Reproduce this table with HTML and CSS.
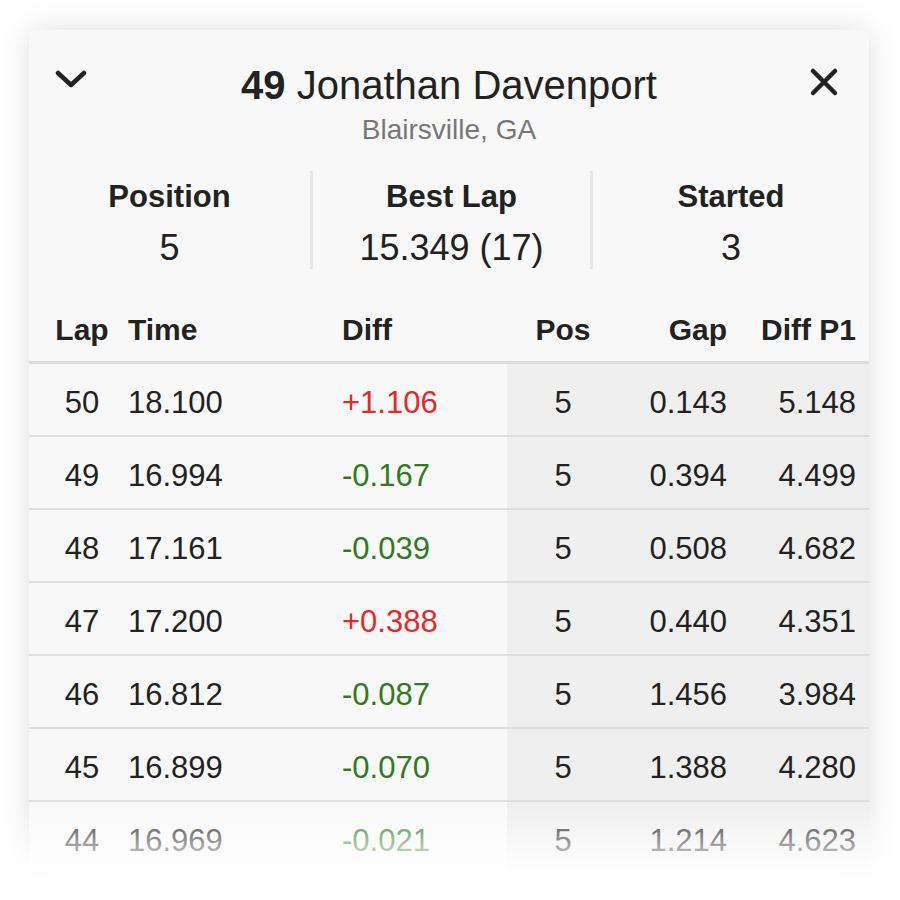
FILE: index.html
```html
<!DOCTYPE html>
<html lang="en">
    <head>
        <title>Driver Laps</title>
        <link rel="stylesheet" href="styles.css">
    </head>
    <body>
        <div class="page">
            <section class="driver-card">
                <div class="card-head">
                    <button class="icon-btn left" aria-label="Collapse">
                        <svg width="32" height="22" viewBox="0 0 32 22"><polyline points="3,5 16,17 29,5" fill="none" stroke="#222" stroke-width="4.5" stroke-linecap="round" stroke-linejoin="round"/></svg>
                    </button>
                    <div class="driver-name">
                        <h1><b>49</b> Jonathan Davenport</h1>
                        <p class="hometown">Blairsville, GA</p>
                    </div>
                    <button class="icon-btn right" aria-label="Close">
                        <svg width="30" height="30" viewBox="0 0 30 30"><path d="M4 4 L26 26 M26 4 L4 26" fill="none" stroke="#222" stroke-width="4.5" stroke-linecap="round"/></svg>
                    </button>
                </div>

                <div class="stats">
                    <div class="stat">
                        <div class="stat-label">Position</div>
                        <div class="stat-value">5</div>
                    </div>
                    <div class="stat">
                        <div class="stat-label">Best Lap</div>
                        <div class="stat-value">15.349 (17)</div>
                    </div>
                    <div class="stat">
                        <div class="stat-label">Started</div>
                        <div class="stat-value">3</div>
                    </div>
                </div>

                <div class="laps">
                    <div class="lap-row lap-head">
                        <div class="c-lap">Lap</div>
                        <div class="c-time">Time</div>
                        <div class="c-diff">Diff</div>
                        <div class="c-pos">Pos</div>
                        <div class="c-gap">Gap</div>
                        <div class="c-p1">Diff P1</div>
                    </div>
                    <div id="lap-rows"></div>
                </div>
            </section>
            <div class="fade"></div>
        </div>

        <script src="script.js"></script>
    </body>
</html>
```

FILE: styles.css
```css
body{
    margin: 0;
    background-color: #fff;
    font-family: "Liberation Sans", Arial, sans-serif;
    color: #222;
}
.page{
    position: relative;
    height: 900px;
    overflow: hidden;
}
.driver-card{
    width: 840px;
    margin: 30px 0 0 29px;
    padding-top: 32px;
    background-color: #f8f8f8;
    box-shadow: 0 0 30px rgba(0,0,0,0.13);
}
.card-head{
    display: grid;
    grid-template-columns: 1fr auto 1fr;
    align-items: start;
}
.icon-btn{
    background: none;
    border: none;
    padding: 0;
    display: flex;
}
.icon-btn.left{
    justify-self: start;
    margin: 6px 0 0 26px;
}
.icon-btn.right{
    justify-self: end;
    margin: 5px 30px 0 0;
}
.driver-name{
    text-align: center;
}
.driver-name h1{
    margin: 0;
    font-size: 40px;
    line-height: 46px;
    font-weight: normal;
}
.hometown{
    margin: 6px 0 0;
    font-size: 28px;
    line-height: 32px;
    color: #777;
}
.stats{
    display: grid;
    grid-template-columns: 281px 280px 279px;
    margin-top: 25px;
}
.stat{
    text-align: center;
    padding: 8px 0 0;
}
.stat + .stat{
    border-left: 3px solid #e8e8e8;
}
.stat-label{
    font-size: 31px;
    line-height: 36px;
    font-weight: bold;
}
.stat-value{
    margin-top: 12px;
    font-size: 36px;
    line-height: 42px;
}
.lap-row{
    display: grid;
    grid-template-columns: 99px 214px 165px 112px 108px 142px;
    border-bottom: 2px solid #dedede;
    font-size: 31px;
}
.lap-row > div{
    height: 71px;
    padding-top: 6px;
    line-height: 65px;
    box-sizing: border-box;
    white-space: nowrap;
}
.lap-head{
    border-bottom: 3px solid #dcdcdc;
    font-size: 30px;
    font-weight: bold;
}
.lap-head > div{
    height: 92px;
    line-height: 36px;
    padding-top: 43px;
}
.c-lap{
    padding-left: 7px;
    text-align: center;
}
.c-pos{
    text-align: center;
}
.c-gap{
    text-align: right;
}
.c-p1{
    text-align: right;
    padding-right: 13px;
}
.lap-row:not(.lap-head) .c-pos,
.lap-row:not(.lap-head) .c-gap,
.lap-row:not(.lap-head) .c-p1{
    background-color: #efefef;
}
.up{
    color: #e12a2a;
}
.down{
    color: #2e7b20;
}
.fade{
    position: absolute;
    left: 0;
    right: 0;
    top: 802px;
    height: 98px;
    background: linear-gradient(rgba(255,255,255,0), rgba(255,255,255,0.95) 72%, #fff);
}
```

FILE: script.js
```js
// laps, newest first
const laps = [
  [50, '18.100', '+1.106', 5, '0.143', '5.148'],
  [49, '16.994', '-0.167', 5, '0.394', '4.499'],
  [48, '17.161', '-0.039', 5, '0.508', '4.682'],
  [47, '17.200', '+0.388', 5, '0.440', '4.351'],
  [46, '16.812', '-0.087', 5, '1.456', '3.984'],
  [45, '16.899', '-0.070', 5, '1.388', '4.280'],
  [44, '16.969', '-0.021', 5, '1.214', '4.623']
];

const lapRows = document.getElementById('lap-rows');

laps.forEach(lap => {
  const row = document.createElement('div');
  row.className = 'lap-row';
  const diffClass = lap[2].startsWith('+') ? 'up' : 'down';
  row.innerHTML =
    `<div class="c-lap">${lap[0]}</div>` +
    `<div class="c-time">${lap[1]}</div>` +
    `<div class="c-diff ${diffClass}">${lap[2]}</div>` +
    `<div class="c-pos">${lap[3]}</div>` +
    `<div class="c-gap">${lap[4]}</div>` +
    `<div class="c-p1">${lap[5]}</div>`;
  lapRows.appendChild(row);
});
```
